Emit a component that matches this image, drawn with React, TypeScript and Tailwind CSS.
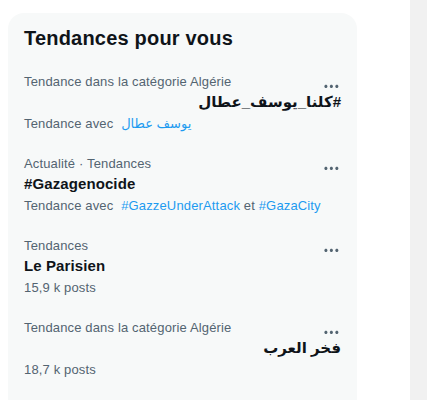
import React from "react";

interface ITrend {
  label: string;
  title: string;
  rtl?: boolean;
  sub: React.ReactNode;
}

const MoreIcon = () => (
  <svg viewBox="0 0 24 24" className="h-[18.75px] w-[18.75px] fill-[#536471]">
    <path d="M3 12c0-1.1.9-2 2-2s2 .9 2 2-.9 2-2 2-2-.9-2-2zm9 2c1.1 0 2-.9 2-2s-.9-2-2-2-2 .9-2 2 .9 2 2 2zm7 0c1.1 0 2-.9 2-2s-.9-2-2-2-2 .9-2 2 .9 2 2 2z" />
  </svg>
);

const trends: ITrend[] = [
  {
    label: "Tendance dans la catégorie Algérie",
    title: "#كلنا_يوسف_عطال",
    rtl: true,
    sub: (
      <>
        Tendance avec <span className="ml-1 text-[#1d9bf0]">يوسف عطال</span>
      </>
    ),
  },
  {
    label: "Actualité · Tendances",
    title: "#Gazagenocide",
    sub: (
      <>
        Tendance avec <span className="ml-1 text-[#1d9bf0]">#GazzeUnderAttack</span> et{" "}
        <span className="text-[#1d9bf0]">#GazaCity</span>
      </>
    ),
  },
  { label: "Tendances", title: "Le Parisien", sub: "15,9 k posts" },
  {
    label: "Tendance dans la catégorie Algérie",
    title: "فخر العرب",
    rtl: true,
    sub: "18,7 k posts",
  },
];

const TrendRow = ({ trend }: { trend: ITrend }) => {
  return (
    <div className="px-4 py-3">
      <div className="flex h-4 items-start justify-between">
        <div className="text-[13px] leading-4 tracking-[0.15px] text-[#536471]">
          {trend.label}
        </div>
        <div className="mt-[2.5px] h-[18.75px]">
          <MoreIcon />
        </div>
      </div>
      <div
        dir={trend.rtl ? "rtl" : "ltr"}
        className="mt-[2px] text-[15px] font-bold leading-5 tracking-[0.1px] text-[#0f1419]"
      >
        {trend.title}
      </div>
      <div className="mt-1 text-[13px] leading-4 tracking-[0.15px] text-[#536471]">
        {trend.sub}
      </div>
    </div>
  );
};

const App = () => {
  return (
    <div
      className="flex h-[400px] w-[427px] overflow-hidden bg-white"
      style={{ fontFamily: '"Liberation Sans", "DejaVu Sans", sans-serif' }}
    >
      <div className="ml-2 mt-[13px] w-[349px]">
        <div className="h-full rounded-t-2xl bg-[#f7f9f9]">
          <div className="px-4 pb-3 pt-[13px] text-[20px] font-extrabold leading-6 tracking-[0.2px] text-[#0f1419]">
            Tendances pour vous
          </div>
          {trends.map((t) => (
            <TrendRow key={t.title} trend={t} />
          ))}
        </div>
      </div>
      <div className="ml-auto w-[17px] bg-[#f1f1f1]" />
    </div>
  );
};

export default App;
